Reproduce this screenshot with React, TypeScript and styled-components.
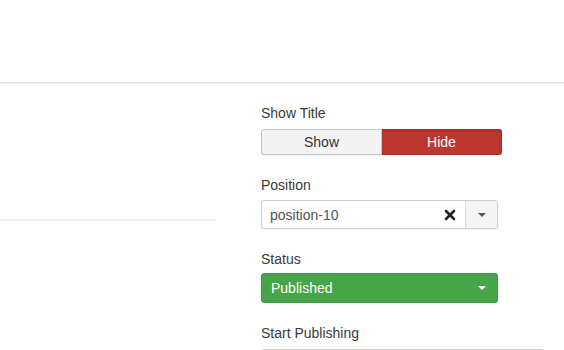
import React from "react";
import styled, { createGlobalStyle } from "styled-components";

const GlobalStyle = createGlobalStyle`
  body {
    margin: 0;
    background: #fff;
    font-family: "Liberation Sans", Arial, sans-serif;
    color: #333;
  }
`;

const Header = styled.header`
  height: 82px;
  border-bottom: 1px solid #dcdcdc;
  box-shadow: 0 1px 1px rgba(0, 0, 0, 0.04);
`;

const Main = styled.main`
  display: grid;
  grid-template-columns: 216px 237px;
  column-gap: 45px;
`;

const LeftPane = styled.div`
  height: 136px;
  border-bottom: 2px solid #ececec;
`;

const Sidebar = styled.aside`
  padding-top: 21px;
  display: flex;
  flex-direction: column;
`;

const Field = styled.div`
  display: flex;
  flex-direction: column;
  margin-bottom: 21px;
`;

const Label = styled.label<{ $gap?: number }>`
  font-size: 14px;
  line-height: 18px;
  color: #3a3a3a;
  margin-bottom: ${(p) => p.$gap ?? 6}px;
`;

const Toggle = styled.div`
  display: flex;
  width: 241px;
  height: 26px;
`;

const ToggleButton = styled.button<{ $active?: boolean }>`
  flex: 1;
  font-family: inherit;
  font-size: 14px;
  padding: 0;
  cursor: pointer;
  border: 1px solid ${(p) => (p.$active ? "#a52f28" : "#c5c5c5")};
  background: ${(p) => (p.$active ? "#bd362f" : "#f3f3f3")};
  color: ${(p) => (p.$active ? "#fff" : "#333")};
  box-shadow: ${(p) =>
    p.$active ? "inset 0 1px 2px rgba(0,0,0,0.15)" : "0 1px 2px rgba(0,0,0,0.05)"};
  &:first-child {
    border-radius: 3px 0 0 3px;
  }
  &:last-child {
    border-radius: 0 3px 3px 0;
    border-left: none;
  }
`;

const ChosenSelect = styled.div`
  display: flex;
  align-items: stretch;
  width: 237px;
  height: 29px;
  box-sizing: border-box;
  border: 1px solid #cfcfcf;
  border-radius: 3px;
  background: #fff;
  box-shadow: 0 1px 2px rgba(0, 0, 0, 0.06);
`;

const ChosenValue = styled.span`
  flex: 1;
  display: flex;
  align-items: center;
  padding-left: 8px;
  font-size: 14px;
  color: #555;
`;

const ClearButton = styled.span`
  display: flex;
  align-items: center;
  justify-content: center;
  width: 14px;
  margin-right: 8px;
`;

const CaretBox = styled.span<{ $solid?: boolean }>`
  display: flex;
  align-items: center;
  justify-content: center;
  width: 31px;
  border-left: ${(p) => (p.$solid ? "none" : "1px solid #dcdcdc")};
  background: ${(p) => (p.$solid ? "transparent" : "#f5f5f5")};
  border-radius: 0 3px 3px 0;
`;

const Caret = styled.span<{ $color: string }>`
  width: 0;
  height: 0;
  border-left: 4px solid transparent;
  border-right: 4px solid transparent;
  border-top: 4px solid ${(p) => p.$color};
`;

const StatusSelect = styled.div`
  display: flex;
  width: 237px;
  height: 30px;
  box-sizing: border-box;
  border: 1px solid #3f973f;
  border-radius: 3px;
  background: #46a546;
  color: #fff;
`;

const StatusValue = styled.span`
  flex: 1;
  display: flex;
  align-items: center;
  padding-left: 9px;
  font-size: 14px;
`;

const DateInput = styled.div`
  width: 284px;
  height: 20px;
  box-sizing: border-box;
  border: 1px solid #cfcfcf;
  border-bottom: none;
  border-radius: 3px 3px 0 0;
`;

const CloseIcon = () => (
  <svg width="12" height="12" viewBox="0 0 12 12">
    <path d="M2 2 L10 10 M10 2 L2 10" stroke="#222" strokeWidth="2.6" strokeLinecap="round" />
  </svg>
);

export default function App() {
  return (
    <>
      <GlobalStyle />
      <Header />
      <Main>
        <LeftPane />
        <Sidebar>
          <Field>
            <Label $gap={7}>Show Title</Label>
            <Toggle>
              <ToggleButton>Show</ToggleButton>
              <ToggleButton $active>Hide</ToggleButton>
            </Toggle>
          </Field>
          <Field>
            <Label>Position</Label>
            <ChosenSelect>
              <ChosenValue>position-10</ChosenValue>
              <ClearButton>
                <CloseIcon />
              </ClearButton>
              <CaretBox>
                <Caret $color="#555" />
              </CaretBox>
            </ChosenSelect>
          </Field>
          <Field>
            <Label $gap={5}>Status</Label>
            <StatusSelect>
              <StatusValue>Published</StatusValue>
              <CaretBox $solid>
                <Caret $color="#fff" />
              </CaretBox>
            </StatusSelect>
          </Field>
          <Field>
            <Label $gap={7}>Start Publishing</Label>
            <DateInput />
          </Field>
        </Sidebar>
      </Main>
    </>
  );
}
